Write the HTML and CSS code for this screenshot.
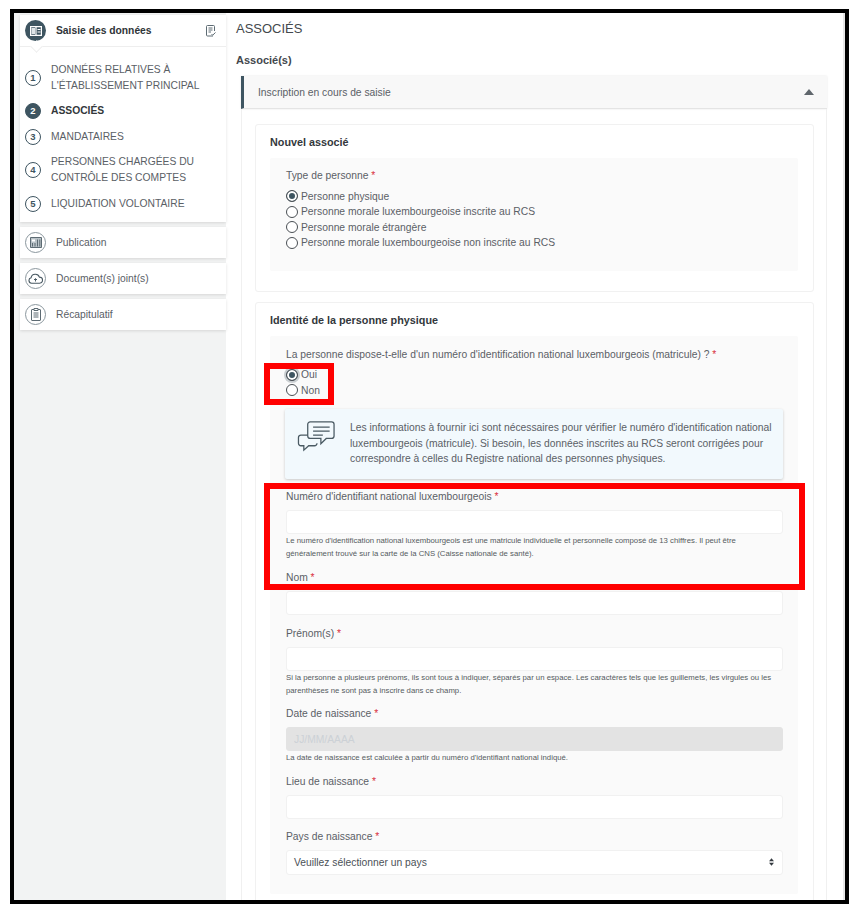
FILE: index.html
```html
<!DOCTYPE html>
<html lang="fr">
  <head>
    <meta charset="UTF-8" />
    <title>Associés</title>
    <link rel="stylesheet" href="styles.css">
  </head>
  <body>
    <div class="frame">
      <div class="sidebar">
        <div class="side-card">
          <div class="side-head">
            <span class="head-icon">
              <svg width="12" height="10" viewBox="0 0 12 10"><path d="M.6.6h10.800v8.800H.6zM6 .6v8.800" fill="none" stroke="#fff" stroke-width="1.200"/><path d="M1.500 2h3.500v6H1.500z" fill="#dfe5e8"/><path d="M7.500 3.500h3M7.500 6h3" stroke="#fff"/></svg>
            </span>
            <b>Saisie des données</b>
            <svg class="head-note" width="10" height="12" viewBox="0 0 10 12"><path d="M7 11H1.500a1 1 0 0 1-1-1V1.500a1 1 0 0 1 1-1h6a1 1 0 0 1 1 1V6M2.500 3h4M2.500 5h4M2.500 7h2.500M5.500 9l1.200 1.200L9.500 7.500" fill="none" stroke="#5d6b73"/></svg>
          </div>
          <ul class="steps">
            <li><span class="num">1</span><span>DONNÉES RELATIVES À<br>L'ÉTABLISSEMENT PRINCIPAL</span></li>
            <li class="active"><span class="num">2</span><span>ASSOCIÉS</span></li>
            <li><span class="num">3</span><span>MANDATAIRES</span></li>
            <li><span class="num">4</span><span>PERSONNES CHARGÉES DU<br>CONTRÔLE DES COMPTES</span></li>
            <li><span class="num">5</span><span>LIQUIDATION VOLONTAIRE</span></li>
          </ul>
        </div>
        <div class="side-link">
          <span class="ring"><svg width="12" height="11" viewBox="0 0 12 11"><path d="M.5.500h11v10H.5z" fill="#b9c2c7" stroke="#5d6b73"/><path d="M2 2.500h3v2H2z" fill="#fff"/><path d="M2.500 6v3.500M5 6v3.500M7.500 2.500v7M9.800 2.500v7" stroke="#5d6b73"/></svg></span>
          Publication
        </div>
        <div class="side-link">
          <span class="ring"><svg width="15" height="11" viewBox="0 0 15 11"><path d="M4 10.200H3.500a2.800 2.800 0 0 1-.4-5.500 4.300 4.300 0 0 1 8.300-.6 3 3 0 0 1 .2 6.100z" fill="none" stroke="#4a5a63" stroke-width="1.100"/><path d="M7.500 8.500V6M6 7l1.500-1.500L9 7" fill="none" stroke="#4a5a63"/></svg></span>
          Document(s) joint(s)
        </div>
        <div class="side-link">
          <span class="ring"><svg width="10" height="13" viewBox="0 0 10 13"><path d="M3 1.500H1a.5.500 0 0 0-.5.500v10a.5.500 0 0 0 .5.500h8a.5.500 0 0 0 .5-.5V2a.5.500 0 0 0-.5-.5H7M3 .5h4v2H3zM2.500 5h5M2.500 7h5M2.500 9h5" fill="none" stroke="#5d6b73"/></svg></span>
          Récapitulatif
        </div>
      </div>

      <div class="main">
        <h1>ASSOCIÉS</h1>
        <h2>Associé(s)</h2>
        <div class="accordion">
          <div class="acc-head">
            <span>Inscription en cours de saisie</span>
            <span class="caret"></span>
          </div>
          <div class="acc-body">
            <section class="card">
              <h3>Nouvel associé</h3>
              <div class="panel panel-type">
                <div class="label">Type de personne <em>*</em></div>
                <div class="radio"><span class="dot on"></span>Personne physique</div>
                <div class="radio"><span class="dot"></span>Personne morale luxembourgeoise inscrite au RCS</div>
                <div class="radio"><span class="dot"></span>Personne morale étrangère</div>
                <div class="radio"><span class="dot"></span>Personne morale luxembourgeoise non inscrite au RCS</div>
              </div>
            </section>

            <section class="card">
              <h3>Identité de la personne physique</h3>
              <div class="panel">
                <div class="label">La personne dispose-t-elle d'un numéro d'identification national luxembourgeois (matricule) ? <em>*</em></div>
                <div class="marked">
                  <div class="radio"><span class="dot on focus"></span>Oui</div>
                  <div class="radio"><span class="dot"></span>Non</div>
                </div>
                <div class="info">
                  <svg width="39" height="32" viewBox="0 0 40 32"><path d="M11 16V4a2.500 2.500 0 0 1 2.500-2.500h22A2.500 2.500 0 0 1 38 4v12a2.500 2.500 0 0 1-2.500 2.500H30L24.500 24v-5.500H13.500A2.500 2.500 0 0 1 11 16z" fill="none" stroke="#4a5a63" stroke-width="1.300"/><path d="M16.500 7h17M16.500 11h17M16.500 15h10" stroke="#4a5a63" stroke-width="1.300"/><path d="M11 15H4a2.500 2.500 0 0 0-2.500 2.500v6A2.500 2.500 0 0 0 4 26h3v4.500l5-4.500h6a2.500 2.500 0 0 0 2.500-2.500" fill="none" stroke="#4a5a63" stroke-width="1.300"/></svg>
                  <p>Les informations à fournir ici sont nécessaires pour vérifier le numéro d'identification national luxembourgeois (matricule). Si besoin, les données inscrites au RCS seront corrigées pour correspondre à celles du Registre national des personnes physiques.</p>
                </div>

                <div class="marked-block">
                  <div class="label">Numéro d'identifiant national luxembourgeois <em>*</em></div>
                  <input class="field" type="text">
                  <p class="hint">Le numéro d'identification national luxembourgeois est une matricule individuelle et personnelle composé de 13 chiffres. Il peut être<br>généralement trouvé sur la carte de la CNS (Caisse nationale de santé).</p>
                  <div class="label label-nom">Nom <em>*</em></div>
                </div>
                <input class="field" type="text">

                <div class="label label-prenom">Prénom(s) <em>*</em></div>
                <input class="field" type="text">
                <p class="hint">Si la personne a plusieurs prénoms, ils sont tous à indiquer, séparés par un espace. Les caractères tels que les guillemets, les virgules ou les parenthèses ne sont pas à inscrire dans ce champ.</p>

                <div class="label label-date">Date de naissance <em>*</em></div>
                <input class="field" type="text" placeholder="JJ/MM/AAAA" disabled>
                <p class="hint">La date de naissance est calculée à partir du numéro d'identifiant national indiqué.</p>

                <div class="label label-lieu">Lieu de naissance <em>*</em></div>
                <input class="field" type="text">

                <div class="label label-pays">Pays de naissance <em>*</em></div>
                <div class="select">
                  <span>Veuillez sélectionner un pays</span>
                  <svg width="5" height="8" viewBox="0 0 6 9"><path d="M3 0l3 3.500H0zM3 9L0 5.500h6z" fill="#343a40"/></svg>
                </div>
              </div>
            </section>
          </div>
        </div>
      </div>
    </div>
  </body>
</html>
```

FILE: styles.css
```css
html,
body {
  margin: 0;
  height: 100%;
  background: #fff;
  font-family: "Liberation Sans", Arial, sans-serif;
  font-size: 10.3px;
  color: #4b5157;
}
.frame {
  box-sizing: border-box;
  width: 839px;
  height: 895px;
  margin: 9px 0 0 10px;
  border: 4px solid #000;
  display: flex;
  overflow: hidden;
  background: #fff;
}

/* left column */
.sidebar {
  width: 212px;
  flex: none;
  background: #f2f3f3;
  padding: 2px 0 0 6px;
  box-sizing: border-box;
}
.side-card {
  background: #fff;
  box-shadow: 0 1px 3px rgba(0, 0, 0, .12);
  padding-bottom: 10.5px;
}
.side-head {
  height: 32px;
  box-sizing: border-box;
  display: flex;
  align-items: center;
  padding: 0 10px 0 5px;
  border-bottom: 1px solid #eee;
  position: relative;
}
.side-head:after {
  content: "";
  position: absolute;
  left: 12px;
  bottom: -5px;
  width: 8px;
  height: 8px;
  background: #fff;
  border-right: 1px solid #eee;
  border-bottom: 1px solid #eee;
  transform: rotate(45deg);
}
.head-icon {
  width: 21px;
  height: 21px;
  border-radius: 50%;
  background: #3e5561;
  display: flex;
  align-items: center;
  justify-content: center;
  margin-right: 10px;
}
.side-head b {
  flex: 1;
  color: #2f3438;
}
.steps {
  list-style: none;
  margin: 0;
  padding: 14.5px 0 0 5px;
}
.steps li {
  display: flex;
  align-items: center;
  gap: 10px;
  line-height: 16px;
  margin-bottom: 9.5px;
  color: #5a6066;
}
.steps li:last-child {
  margin-bottom: 0;
}
.num {
  box-sizing: border-box;
  width: 16px;
  height: 16px;
  flex: none;
  border: 1.5px solid #3e5561;
  border-radius: 50%;
  display: flex;
  align-items: center;
  justify-content: center;
  font-size: 9.5px;
  font-weight: bold;
  color: #3e5561;
}
.steps .active {
  color: #33383c;
  font-weight: bold;
}
.active .num {
  background: #3e5561;
  color: #fff;
}
.side-link {
  height: 31.5px;
  margin-top: 4.5px;
  background: #fff;
  box-shadow: 0 1px 3px rgba(0, 0, 0, .12);
  display: flex;
  align-items: center;
  padding-left: 5px;
  gap: 10px;
  color: #5a6066;
}
.ring {
  box-sizing: border-box;
  width: 21px;
  height: 21px;
  border: 1px solid #8b979e;
  border-radius: 50%;
  display: flex;
  align-items: center;
  justify-content: center;
}

/* right column */
.main {
  flex: 1;
  min-width: 0;
  padding: 0 18px 0 10px;
  box-shadow: inset -2px 0 #e6e6e6;
}
h1 {
  font-size: 13px;
  font-weight: normal;
  color: #43484d;
  margin: 8px 0 0;
  line-height: 15px;
}
h2 {
  font-size: 11px;
  color: #43484d;
  margin: 18px 0 0;
  line-height: 13px;
}
.accordion {
  margin: 9px 0 0 5px;
}
.acc-head {
  height: 33px;
  box-sizing: border-box;
  background: #f8f8f8;
  border-left: 3px solid #3e5561;
  border-bottom: 1px solid #e4e4e4;
  display: flex;
  align-items: center;
  justify-content: space-between;
  padding: 0 13px 0 14px;
  color: #5a6066;
  box-shadow: 0 0 2px rgba(0, 0, 0, .1);
}
.caret {
  border-left: 5px solid transparent;
  border-right: 5px solid transparent;
  border-bottom: 6px solid #5f666c;
}
.acc-body {
  border-left: 1px solid #f0f0f0;
  border-right: 1px solid #f0f0f0;
  padding: 15px 12px 0 13px;
}
.card {
  border: 1px solid #f1f1f1;
  border-radius: 3px;
  padding: 10px 15px 20px 14px;
  margin-bottom: 10px;
}
h3 {
  font-size: 10.8px;
  color: #33383c;
  margin: 0 0 8px;
  line-height: 15px;
}
.panel {
  background: #fafafa;
  border-radius: 2px;
  padding: 10px 15px 19px 16px;
}
.panel-type {
  height: 113px;
  box-sizing: border-box;
  padding-top: 9px;
}
.label {
  padding-top: 1px;
  line-height: 16px;
  color: #5a6066;
}
.label em {
  font-style: normal;
  color: #d9303e;
}
.panel-type .label {
  margin-bottom: 4.5px;
}
.radio {
  display: flex;
  align-items: center;
  line-height: 15.5px;
  color: #5a6066;
}
.dot {
  box-sizing: border-box;
  width: 12px;
  height: 12px;
  border: 1px solid #4a4f54;
  border-radius: 50%;
  margin-right: 3px;
  background: #fff;
  flex: none;
}
.dot.on {
  background: #3e5561;
  box-shadow: inset 0 0 0 2px #fff;
}
.dot.focus {
  box-shadow: inset 0 0 0 2px #fff, 0 0 0 2px #c9ced1;
}
.marked {
  margin-top: 4px;
  position: relative;
}
/* red annotation boxes drawn on the screenshot */
.marked:after {
  content: "";
  position: absolute;
  left: -22px;
  top: -4px;
  width: 70px;
  height: 42px;
  border: 6px solid #f00;
  box-sizing: border-box;
}
.info {
  display: flex;
  gap: 14px;
  height: 70px;
  box-sizing: border-box;
  margin: 11px 0 0 -1px;
  padding: 11px 10px 0 12px;
  background: #f2f9fd;
  border-radius: 2px;
  box-shadow: 0 1px 3px rgba(0, 0, 0, .2);
}
.info svg {
  flex: none;
}
.info p {
  margin: 0;
  line-height: 15.5px;
  color: #5a6066;
}
.marked-block {
  margin-top: 9px;
  position: relative;
}
.marked-block:after {
  content: "";
  position: absolute;
  left: -22px;
  top: -5px;
  width: 541px;
  height: 107px;
  border: 6px solid #f00;
  box-sizing: border-box;
}
.field {
  display: block;
  box-sizing: border-box;
  width: 100%;
  height: 24px;
  margin: 0;
  border: 1px solid #f1f1f1;
  border-radius: 3px;
  background: #fff;
  padding: 0 7px;
  font: inherit;
}
.field:disabled {
  background: #e3e3e3;
  border-color: #e3e3e3;
}
.field::placeholder {
  color: #ccd1d6;
  opacity: 1;
}
.hint {
  margin: 0;
  font-size: 7.75px;
  line-height: 13px;
  color: #555b60;
}
.marked-block .label,
.label-prenom,
.label-date,
.label-lieu,
.label-pays {
  margin-bottom: 5px;
}
.marked-block .label-nom {
  margin-top: 9px;
}
.label-prenom {
  margin-top: 10px;
}
.label-date {
  margin-top: 8px;
}
.label-lieu {
  margin-top: 9px;
}
.label-pays {
  margin-top: 9px;
}
.select {
  box-sizing: border-box;
  height: 24.5px;
  display: flex;
  align-items: center;
  justify-content: space-between;
  background: #fff;
  border: 1px solid #f1f1f1;
  border-radius: 3px;
  padding: 0 8px 0 7px;
  color: #4b5157;
}
```
